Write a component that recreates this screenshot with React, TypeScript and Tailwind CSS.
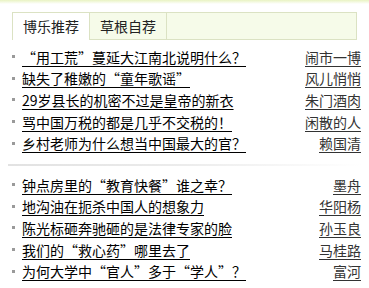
const groupA = [
  { title: '“用工荒”蔓延大江南北说明什么？', author: '闹市一博' },
  { title: '缺失了稚嫩的“童年歌谣”', author: '风儿悄悄' },
  { title: '29岁县长的机密不过是皇帝的新衣', author: '朱门酒肉' },
  { title: '骂中国万税的都是几乎不交税的！', author: '闲散的人' },
  { title: '乡村老师为什么想当中国最大的官？', author: '赖国清' },
];

const groupB = [
  { title: '钟点房里的“教育快餐”谁之幸？', author: '墨舟' },
  { title: '地沟油在扼杀中国人的想象力', author: '华阳杨' },
  { title: '陈光标砸奔驰砸的是法律专家的脸', author: '孙玉良' },
  { title: '我们的“救心药”哪里去了', author: '马桂路' },
  { title: '为何大学中“官人”多于“学人”？', author: '富河' },
];

const font = { fontFamily: '"Noto Sans CJK SC", "Noto Sans", sans-serif' };

function Row({ title, author }: { title: string; author: string }) {
  return (
    <li className="flex items-center h-[21.6px] text-[14px] leading-none">
      <span className="w-[3px] h-[3px] bg-[#9a9a9a] ml-[12px] mr-[7px] shrink-0" />
      <a className="text-black underline underline-offset-[3px] whitespace-nowrap">{title}</a>
      <a className="ml-auto text-[#333] underline underline-offset-[3px] whitespace-nowrap">{author}</a>
    </li>
  );
}

export default function App() {
  return (
    <div className="w-[369px] h-[288px] bg-white overflow-hidden" style={font}>
      <div className="h-[4px] bg-gradient-to-b from-[#e9f3c2] to-white" />
      <div className="mt-[8px] mx-[12px] h-[28px] flex border border-[#dbe2c3] bg-[#f6fbe9]">
        <div className="w-[77px] bg-white border-r border-[#dbe2c3] flex items-center justify-center text-[14px] text-[#222] -mb-px">
          博乐推荐
        </div>
        <div className="w-[77px] border-r border-[#dbe2c3] flex items-center justify-center text-[14px] text-[#222]">
          草根自荐
        </div>
      </div>
      <ul className="mt-[6px] pr-[8px]">
        {groupA.map((r) => (
          <Row key={r.title} {...r} />
        ))}
      </ul>
      <div className="mt-[10px] mx-[8px] h-[2px] bg-gradient-to-r from-[#e2e2e2] via-[#ececec] to-white" />
      <ul className="mt-[8px] pr-[8px]">
        {groupB.map((r) => (
          <Row key={r.title} {...r} />
        ))}
      </ul>
    </div>
  );
}
